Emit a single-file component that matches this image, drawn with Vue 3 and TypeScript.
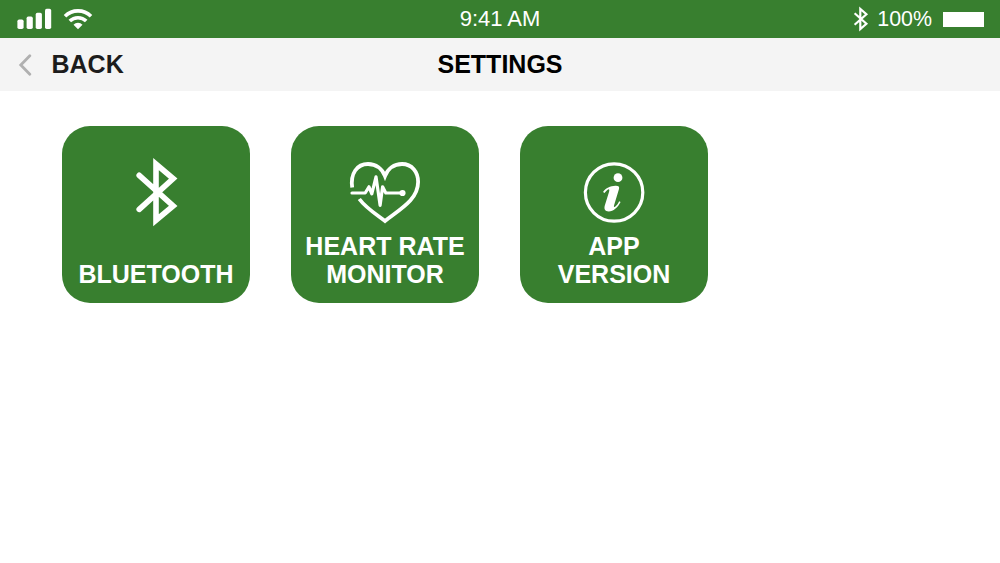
<script setup lang="ts">
type IconName = 'bluetooth' | 'heart' | 'info'

interface Tile {
  icon: IconName
  lines: string[]
}

const tiles: Tile[] = [
  { icon: 'bluetooth', lines: ['BLUETOOTH'] },
  { icon: 'heart', lines: ['HEART RATE', 'MONITOR'] },
  { icon: 'info', lines: ['APP', 'VERSION'] },
]
</script>

<template>
  <div class="screen">
    <div class="status">
      <div class="status-left">
        <svg class="signal" width="36" height="22" viewBox="0 0 36 22">
          <rect x="1.4" y="11.6" width="6.2" height="9.4" rx="1.7" />
          <rect x="10.6" y="8.6" width="6.2" height="12.4" rx="1.7" />
          <rect x="19.7" y="4.8" width="6.2" height="16.2" rx="1.7" />
          <rect x="29" y="0.8" width="6.2" height="20.2" rx="1.7" />
        </svg>
        <svg class="wifi" width="30" height="22" viewBox="0 0 30 22">
          <path d="M2 8.2A18.6 18.6 0 0 1 28 8.2" />
          <path d="M6.8 13A11.8 11.8 0 0 1 23.2 13" />
          <path class="dot" d="M10.5 16.7A6.4 6.4 0 0 1 19.5 16.7L15 21.2Z" />
        </svg>
      </div>
      <div class="clock">9:41 AM</div>
      <div class="status-right">
        <svg class="bt-small" width="16" height="26" viewBox="0 0 16 26">
          <path d="M1.6 7.2L13.4 17.8L7.3 23V3L13.4 8.2L1.6 18.8" />
        </svg>
        <span class="percent">100%</span>
        <span class="battery"></span>
      </div>
    </div>

    <header class="header">
      <button class="back" type="button">
        <svg width="14" height="22" viewBox="0 0 14 22">
          <path d="M11.8 1.8L2.8 11L11.8 20.2" />
        </svg>
        <span>BACK</span>
      </button>
      <h1 class="title">SETTINGS</h1>
      <div></div>
    </header>

    <main class="tiles">
      <button v-for="tile in tiles" :key="tile.icon" class="tile" type="button">
        <svg class="icon" width="188" height="106" viewBox="0 0 188 106">
          <g v-if="tile.icon === 'bluetooth'" class="stroke thick">
            <path d="M77.2 49.3L111.2 80L94 94.2V38L111.2 52.6L77.2 83.3" />
          </g>
          <g v-else-if="tile.icon === 'heart'" class="stroke">
            <path
              class="outline"
              d="M61.2 61.5C59.2 47.5 66 38 77 38C85 38 91.2 42.8 94 50C96.8 42.8 103 38 111 38C121 38 127.1 46 127.1 56C127.1 73.5 109.500 83 94 95C83 86.800 74.500 81.500 68.300 73"
            />
            <path class="pulse" d="M61 67H74.200L78 60.800L80.800 67.800L85 50.800L89.100 79.300L91.600 60.800L94.800 67H110" />
            <circle class="fill" cx="111.500" cy="67" r="3.100" />
          </g>
          <g v-else class="stroke">
            <circle class="ring" cx="94.100" cy="66.500" r="28.700" />
            <circle class="fill" cx="98" cy="51.700" r="4.400" />
            <path
              class="fill"
              d="M83 66C86 61.800 90 59.900 95.500 59.700C98.700 59.600 99.600 60.700 99 63L94 79.400C93.600 81 94.500 81.300 95.600 80.300C97 79.100 98.100 77.300 99.200 75.200L100.600 76.100C97.500 82 93.500 85.400 88.700 85.400C85 85.400 83.800 83 84.800 79.500L89 66C89.900 63.200 88.900 62.600 87.300 63.900C86.200 64.800 85.300 65.800 84.500 67Z"
            />
          </g>
        </svg>
        <span class="label">
          <span v-for="line in tile.lines" :key="line">{{ line }}</span>
        </span>
      </button>
    </main>
  </div>
</template>

<style>
body {
  margin: 0;
  background: #fff;
}
</style>

<style scoped>
.screen {
  width: 1000px;
  height: 563px;
  overflow: hidden;
  background: #fff;
  font-family: 'Liberation Sans', Arial, sans-serif;
}

button {
  border: 0;
  padding: 0;
  font: inherit;
  background: none;
}

svg {
  display: block;
  flex: none;
}

.status {
  display: grid;
  grid-template-columns: 1fr auto 1fr;
  align-items: center;
  box-sizing: border-box;
  height: 38px;
  padding: 0 16px;
  background: #387f2f;
  color: #fff;
  font-size: 22px;
  line-height: 38px;
}

.status-left,
.status-right {
  display: flex;
  align-items: center;
}

.status-left {
  gap: 11px;
}

.status-right {
  justify-content: flex-end;
}

.signal {
  fill: #fff;
}

.wifi {
  fill: none;
  stroke: #fff;
  stroke-width: 3.6;
}

.wifi .dot {
  fill: #fff;
  stroke: none;
}

.bt-small {
  margin-right: 8px;
  fill: none;
  stroke: #fff;
  stroke-width: 2.2;
}

.percent {
  margin-right: 11px;
  font-size: 21.4px;
}

.battery {
  width: 41px;
  height: 15px;
  background: #fff;
}

.header {
  display: grid;
  grid-template-columns: 1fr auto 1fr;
  align-items: center;
  box-sizing: border-box;
  height: 53px;
  padding: 0 18px;
  background: #f4f4f4;
  font-size: 25px;
  font-weight: 700;
}

.back {
  display: flex;
  align-items: center;
  gap: 19.5px;
  color: #1c1c1c;
}

.back path {
  fill: none;
  stroke: #b0b0b0;
  stroke-width: 2.8;
  stroke-linecap: round;
}

.title {
  margin: 0;
  color: #000;
  font-size: 25px;
  line-height: 53px;
}

.tiles {
  display: flex;
  gap: 41px;
  padding: 35px 62px;
}

.tile {
  display: flex;
  flex-direction: column;
  justify-content: space-between;
  box-sizing: border-box;
  width: 188px;
  height: 177px;
  padding-bottom: 15px;
  border-radius: 28px;
  background: #387f2f;
  color: #fff;
}

.icon {
  margin-bottom: -6px;
}

.stroke {
  fill: none;
  stroke: #fff;
  stroke-width: 3.8;
  stroke-linecap: round;
}

.thick {
  stroke-width: 5.6;
}

.outline {
  stroke-linecap: butt;
}

.ring {
  stroke-width: 3.2;
}

.pulse {
  stroke-width: 3.2;
  stroke-linejoin: round;
}

.fill {
  fill: #fff;
  stroke: none;
}

.label {
  display: flex;
  flex-direction: column;
  width: 100%;
  font-size: 25px;
  font-weight: 700;
  line-height: 28px;
  text-align: center;
}
</style>
